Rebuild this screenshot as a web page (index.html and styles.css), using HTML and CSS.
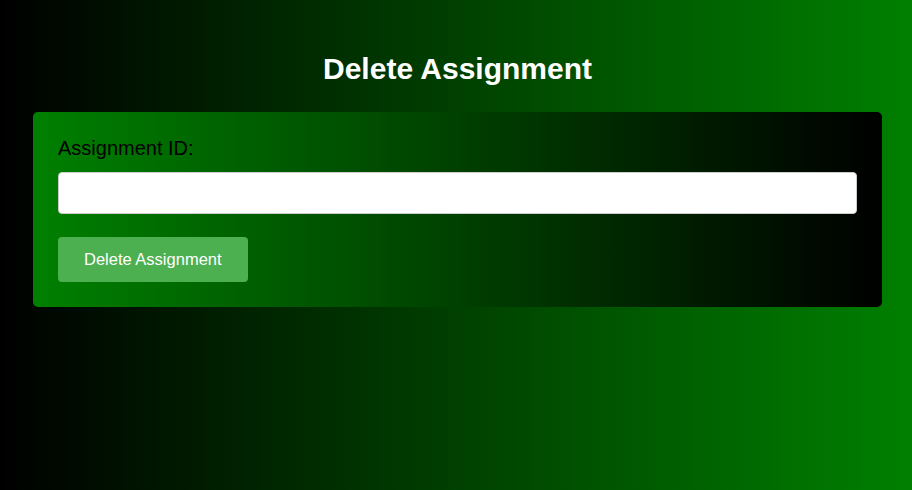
FILE: index.html
```html
<!DOCTYPE html>
<html lang="en">
<head>
<meta charset="utf-8">
<title>Delete Assignment</title>
<link rel="stylesheet" href="styles.css">
</head>
<body>
  <div class="page">
    <h1 class="title">Delete Assignment</h1>
    <form class="card">
      <label class="label" for="aid">Assignment ID:</label>
      <input class="input" id="aid" type="text">
      <button class="btn" type="button">Delete Assignment</button>
    </form>
  </div>
</body>
</html>
```
FILE: styles.css
```css
html, body {
  margin: 0;
  padding: 0;
}
body {
  min-height: 100vh;
  background: linear-gradient(to right, #000000, #008000);
  font-family: "Liberation Sans", Arial, sans-serif;
}
.page {
  padding: 52px 30px 0 33px;
}
.title {
  margin: 0 0 25px;
  font-size: 30px;
  font-weight: bold;
  line-height: 34.5px;
  color: #ffffff;
  text-align: center;
}
.card {
  display: flex;
  flex-direction: column;
  align-items: flex-start;
  padding: 25px;
  border-radius: 5px;
  background: linear-gradient(to right, #008000, #000000);
}
.label {
  display: block;
  font-size: 20px;
  line-height: 23px;
  color: #000000;
  margin-bottom: 12px;
}
.input {
  box-sizing: border-box;
  width: 100%;
  height: 42px;
  margin: 0 0 23px;
  border: 1px solid #cccccc;
  border-radius: 4px;
  background: #ffffff;
  font-family: inherit;
  font-size: 16px;
}
.btn {
  box-sizing: border-box;
  height: 45px;
  padding: 0 26px;
  border: none;
  border-radius: 4px;
  background: #4caf50;
  color: #ffffff;
  font-family: inherit;
  font-size: 16.5px;
}
```
